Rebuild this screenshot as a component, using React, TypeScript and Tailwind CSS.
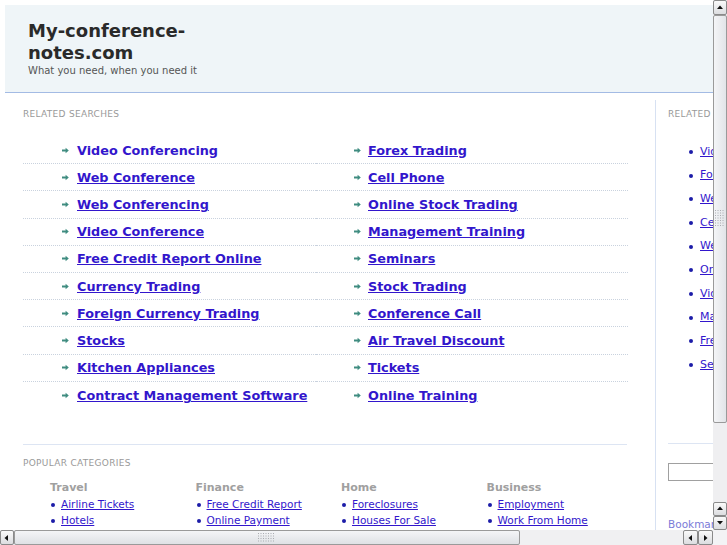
import React from "react";

const searchLeft = [
  "Video Conferencing",
  "Web Conference",
  "Web Conferencing",
  "Video Conference",
  "Free Credit Report Online",
  "Currency Trading",
  "Foreign Currency Trading",
  "Stocks",
  "Kitchen Appliances",
  "Contract Management Software",
];

const searchRight = [
  "Forex Trading",
  "Cell Phone",
  "Online Stock Trading",
  "Management Training",
  "Seminars",
  "Stock Trading",
  "Conference Call",
  "Air Travel Discount",
  "Tickets",
  "Online Training",
];

const sideLinks = [
  "Video Conferencing",
  "Forex Trading",
  "Web Conference",
  "Cell Phone",
  "Web Conferencing",
  "Online Stock Trading",
  "Video Conference",
  "Management Training",
  "Free Credit Report Online",
  "Seminars",
];

const categories = [
  { title: "Travel", items: ["Airline Tickets", "Hotels"] },
  { title: "Finance", items: ["Free Credit Report", "Online Payment"] },
  { title: "Home", items: ["Foreclosures", "Houses For Sale"] },
  { title: "Business", items: ["Employment", "Work From Home"] },
];

function Arrow() {
  return (
    <svg width="7" height="7" viewBox="0 0 7 7" className="shrink-0">
      <path d="M0 2.6h3.6V0.8L6.8 3.5 3.6 6.2V4.4H0z" fill="#3f8c80" />
    </svg>
  );
}

function SearchColumn({ items, first }: { items: string[]; first?: boolean }) {
  return (
    <div className={`${first ? "w-[293px]" : "w-[312px]"} shrink-0 grid grid-rows-10 h-[272px]`}>
      {items.map((label, i) => (
        <div
          key={label}
          className={`flex items-center ${first ? "pl-[39px]" : "pl-[38px]"} ${i < items.length - 1 ? "border-b border-dotted border-[#c9d2de]" : ""}`}
        >
          <Arrow />
          <a
            href="#"
            className={`${first ? "ml-[8px]" : "ml-[7px]"} text-[12.8px] font-bold text-[#3216cc] ${first && i === 0 ? "no-underline" : "underline"}`}
          >
            {label}
          </a>
        </div>
      ))}
    </div>
  );
}

function Tri({ dir }: { dir: "up" | "down" | "left" | "right" }) {
  const pts = {
    up: "1,5 4,1.5 7,5",
    down: "1,2 4,5.5 7,2",
    left: "5,1 1.5,4 5,7",
    right: "2,1 5.5,4 2,7",
  }[dir];
  return (
    <svg width="8" height="8" viewBox="0 0 8 8">
      <polygon points={pts} fill="#111" />
    </svg>
  );
}

function ScrollButton({ dir, className }: { dir: "up" | "down" | "left" | "right"; className: string }) {
  return (
    <div
      className={`${className} flex items-center justify-center border border-[#8a8a8a] rounded-[2px] bg-gradient-to-b from-[#fafafa] to-[#dcdde0]`}
    >
      <Tri dir={dir} />
    </div>
  );
}

function Grip({ vertical }: { vertical?: boolean }) {
  const cols = vertical ? 4 : 7;
  const rows = vertical ? 7 : 4;
  const dots = [];
  for (let r = 0; r < rows; r++) {
    for (let c = 0; c < cols; c++) {
      dots.push(<rect key={`${r}-${c}`} x={c * 2.5} y={r * 2.5} width="1" height="1" fill="#a9abb0" />);
    }
  }
  return (
    <svg width={cols * 2.5} height={rows * 2.5}>
      {dots}
    </svg>
  );
}

function VScroll() {
  return (
    <div className="w-[14px] h-[530px] flex flex-col bg-[#ebecef]">
      <ScrollButton dir="up" className="h-[15px]" />
      <div className="h-[408px] flex items-center justify-center border border-[#9a9a9a] rounded-[2px] bg-gradient-to-r from-[#f4f5f7] to-[#e2e4e8]">
        <Grip vertical />
      </div>
      <div className="h-[79px] bg-[#efeff1]" />
      <ScrollButton dir="up" className="h-[14px]" />
      <ScrollButton dir="down" className="h-[14px]" />
    </div>
  );
}

function HScroll() {
  return (
    <div className="w-[713px] h-[15px] flex bg-[#ebecef]">
      <ScrollButton dir="left" className="w-[14px]" />
      <div className="w-[506px] flex items-center justify-center border border-[#9a9a9a] rounded-[2px] bg-gradient-to-b from-[#f4f5f7] to-[#dfe1e5]">
        <Grip />
      </div>
      <div className="w-[163px] bg-[#f0f0f2]" />
      <ScrollButton dir="left" className="w-[15px]" />
      <ScrollButton dir="right" className="w-[15px]" />
    </div>
  );
}

export default function App() {
  return (
    <div className="w-[727px] h-[545px] flex flex-col bg-white overflow-hidden font-['DejaVu_Sans',sans-serif]">
      <div className="flex h-[530px]">
        <div className="w-[713px] h-[530px] overflow-hidden">
          <div className="w-[800px] pt-[5px] pl-[5px]">
            {/* header */}
            <div className="h-[88px] bg-[#eff5f8] border-b border-[#a3bbe4] pl-[23px] pt-[15px]">
              <div className="w-[180px] text-[18px] leading-[22px] font-bold text-[#2a2a2a]">
                My-conference-notes.com
              </div>
              <div className="text-[10px] leading-[14px] text-[#555]">What you need, when you need it</div>
            </div>

            <div className="flex mt-[7px]">
              {/* main column */}
              <div className="w-[651px] shrink-0 pl-[18px] pr-[28px] pt-[8px] border-r border-[#d7e1f2]">
                <div className="text-[9px] leading-[13px] tracking-[0.3px] text-[#999]">RELATED SEARCHES</div>
                <div className="flex mt-[16px]">
                  <SearchColumn items={searchLeft} first />
                  <SearchColumn items={searchRight} />
                </div>

                <div className="mt-[35px] border-t border-[#dde5f3] pt-[12px]">
                  <div className="text-[9px] leading-[13px] tracking-[0.3px] text-[#999]">POPULAR CATEGORIES</div>
                  <div className="flex pl-[27px] mt-[10px]">
                    {categories.map((cat) => (
                      <div key={cat.title} className="w-[145.5px] shrink-0">
                        <div className="text-[11px] leading-[16px] font-bold text-[#a0a0a0] mb-[1px]">{cat.title}</div>
                        <ul>
                          {cat.items.map((item) => (
                            <li key={item} className="flex items-center h-[16px]">
                              <span className="w-[4px] h-[4px] rounded-full bg-[#1c1ca8] ml-[1px] mr-[6px]" />
                              <a href="#" className="text-[10.5px] text-[#3216cc] underline">
                                {item}
                              </a>
                            </li>
                          ))}
                        </ul>
                      </div>
                    ))}
                  </div>
                </div>
              </div>

              {/* side column */}
              <div className="w-[140px] shrink-0 pl-[12px] pt-[8px]">
                <div className="text-[9px] leading-[13px] tracking-[0.3px] text-[#999]">RELATED SEARCHES</div>
                <ul className="mt-[19px] pl-[21px] grid grid-rows-10 h-[237px]">
                  {sideLinks.map((item) => (
                    <li key={item} className="flex items-center">
                      <span className="w-[4px] h-[4px] rounded-full bg-[#1c1ca8] mr-[7px]" />
                      <a href="#" className="text-[11px] text-[#3216cc] underline whitespace-nowrap">
                        {item}
                      </a>
                    </li>
                  ))}
                </ul>
                <div className="mt-[66px] border-t border-[#dde5f3]" />
                <input className="mt-[19px] w-[120px] h-[18px] border border-[#a0a0a0] bg-white" />
                <div className="mt-[34px] text-[10.5px] leading-[13px] text-[#7b7bd8] whitespace-nowrap">
                  Bookmark this page
                </div>
              </div>
            </div>
          </div>
        </div>
        <VScroll />
      </div>
      <div className="flex h-[15px]">
        <HScroll />
        <div className="w-[14px] h-[15px] bg-[#f3f3f5]" />
      </div>
    </div>
  );
}
